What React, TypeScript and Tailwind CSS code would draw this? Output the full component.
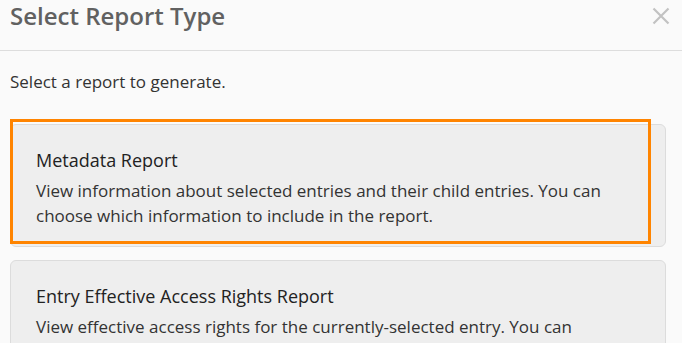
import React from "react";

const font = { fontFamily: '"Open Sans", "Noto Sans", sans-serif' };

function Card({
  title,
  children,
  selected,
}: {
  title: string;
  children: React.ReactNode;
  selected?: boolean;
}) {
  return (
    <div className="relative rounded-[6px] border border-[#dcdcdc] bg-[#eeeeee] pl-[25px] pr-[34px] pt-[23px] pb-[18px]">
      {selected && (
        <div className="pointer-events-none absolute left-[-1px] top-[-6px] bottom-[2px] right-[14px] border-[3px] border-[#ff8400]" />
      )}
      <div className="text-[18px] leading-[24px] text-[#222222]">{title}</div>
      <div className="mt-[6px] text-[17px] leading-[25px] text-[#333333]">{children}</div>
    </div>
  );
}

export default function App() {
  return (
    <div style={font} className="h-[343px] w-[682px] overflow-hidden bg-[#fafafa]">
      <div className="flex h-[51px] items-start justify-between border-b border-[#dddddd] pl-[10px] pr-[11px]">
        <div className="mt-[-1px] text-[24px] font-semibold leading-[34px] text-[#616161]">
          Select Report Type
        </div>
        <svg width="20" height="20" viewBox="0 0 20 20" className="mt-[6px]">
          <path d="M2.5 2.5 L17.5 17.5 M17.5 2.5 L2.5 17.5" stroke="#c2c2c2" strokeWidth="2.2" />
        </svg>
      </div>
      <div className="px-[10px] pt-[19px] text-[17px] leading-[24px] text-[#333333]">
        Select a report to generate.
      </div>
      <div className="mt-[30px] flex flex-col gap-[13px] pl-[10px] pr-[16px]">
        <Card selected title="Metadata Report">
          View information about selected entries and their child entries. You can choose which
          information to include in the report.
        </Card>
        <Card title="Entry Effective Access Rights Report">
          View effective access rights for the currently-selected entry. You can
          <br />
          view access rights for all users or for a specific user or group.
        </Card>
      </div>
    </div>
  );
}
